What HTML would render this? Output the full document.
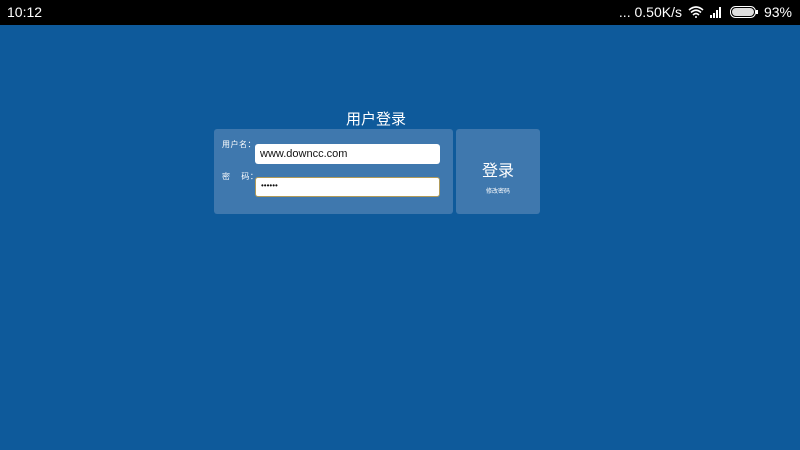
<!DOCTYPE html>
<html><head><meta charset="utf-8"><style>
*{margin:0;padding:0;box-sizing:border-box}
body{width:800px;height:450px;background:#0e5a9b;font-family:"Liberation Sans","Noto Sans CJK SC",sans-serif;position:relative;overflow:hidden}
.sb{position:absolute;left:0;top:0;width:800px;height:25px;background:#000;color:#fff;font-size:14px}
.sb .t{position:absolute;left:7px;top:4px}
.sb .r{position:absolute;right:8px;top:4px;display:flex;align-items:center;gap:6px}
.ttl{position:absolute;left:346px;top:108px;color:#fff;font-size:15px}
.p1{position:absolute;left:214px;top:129px;width:239px;height:85px;background:#3f78ae;border-radius:3px}
.p2{position:absolute;left:456px;top:129px;width:84px;height:85px;background:#3f78ae;border-radius:3px}
.lb{position:absolute;color:#fff;font-size:8px;letter-spacing:0.5px}
.in{position:absolute;left:255px;width:185px;height:20px;background:#fff;border-radius:3px;font-size:11px;padding:4px 5px;color:#111}
.btn{position:absolute;left:0;width:84px;text-align:center;color:#fff}
</style></head><body>
<div class="sb"><span class="t">10:12</span>
<div class="r"><span>... 0.50K/s</span>
<svg width="16" height="12" viewBox="0 0 16 12"><path d="M1 4Q8-2 15 4M3 6.5Q8 2 13 6.5M5 9Q8 6 11 9" stroke="#fff" stroke-width="1.6" fill="none"/><circle cx="8" cy="11" r="1" fill="#fff"/></svg>
<svg width="14" height="12" viewBox="0 0 14 12"><rect x="0" y="9" width="2" height="3" fill="#fff"/><rect x="3" y="7" width="2" height="5" fill="#fff"/><rect x="6" y="4" width="2" height="8" fill="#fff"/><rect x="9" y="1" width="2" height="11" fill="#fff"/></svg>
<svg width="28" height="12" viewBox="0 0 28 12"><rect x="0.5" y="0.5" width="25" height="11" rx="5" stroke="#fff" fill="none"/><rect x="2" y="2" width="22" height="8" rx="4" fill="#ddd"/><rect x="26" y="4" width="2" height="4" fill="#fff"/></svg>
<span>93%</span></div></div>
<div class="ttl">用户登录</div>
<div class="p1"></div>
<div class="lb" style="left:222px;top:139px">用户名：</div>
<div class="lb" style="left:222px;top:171px">密&nbsp;&nbsp;&nbsp;&nbsp;码：</div>
<div class="in" style="top:144px">www.downcc.com</div>
<div class="in" style="top:177px;border:1px solid #b09b5a;padding-top:3px;font-size:8px">••••••</div>
<div class="p2"><div class="btn" style="top:28px;font-size:16px">登录</div><div class="btn" style="top:57px;font-size:6px">修改密码</div></div>
</body></html>
